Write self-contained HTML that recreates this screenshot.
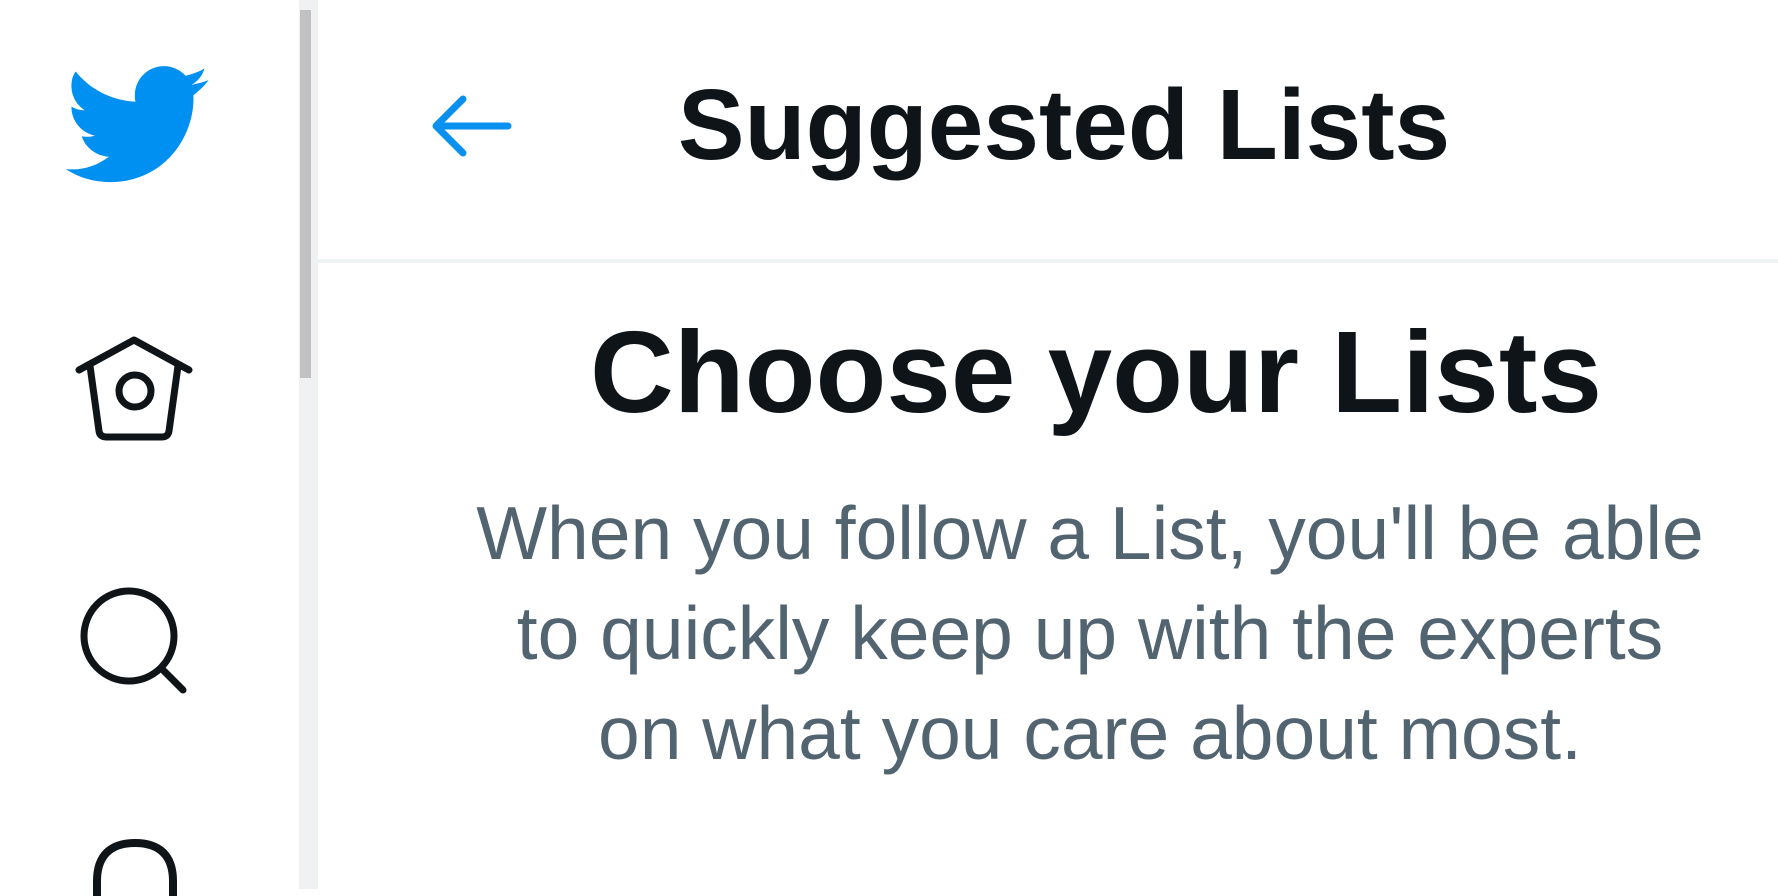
<!DOCTYPE html>
<html><head><meta charset="utf-8"><style>
html,body{margin:0;padding:0;width:1778px;height:889px;overflow:hidden;background:#fff;font-family:"Liberation Sans",sans-serif}
.abs{position:absolute}
.t{white-space:nowrap;text-align:center;line-height:1}
</style></head><body>
<div class="abs" style="left:299px;top:0;width:19px;height:889px;background:#eff1f2"></div>
<div class="abs" style="left:300px;top:10px;width:11px;height:368px;background:#c1c1c1"></div>
<div class="abs" style="left:318px;top:259px;width:1460px;height:4px;background:#eff3f4"></div>
<svg class="abs" style="left:66px;top:66px" width="145" height="118" viewBox="0 0 24 19.5"><path fill="#0090f2" d="M23.6 2.3c-.9.4-1.8.6-2.8.8 1-.6 1.8-1.5 2.1-2.7-.9.6-2 .9-3.1 1.2C18.9.6 17.6 0 16.2 0c-2.7 0-4.8 2.2-4.8 4.8 0 .4 0 .8.1 1.1C7.5 5.7 3.9 3.8 1.6.9c-.5.7-.7 1.5-.7 2.4 0 1.7.9 3.2 2.2 4-.8 0-1.5-.2-2.2-.6v.1c0 2.3 1.7 4.3 3.9 4.7-.4.1-.8.2-1.3.2-.3 0-.6 0-.9-.1.6 1.9 2.4 3.3 4.5 3.4-1.7 1.3-3.8 2.1-6 2.1-.4 0-.8 0-1.2-.1 2.1 1.4 4.7 2.2 7.4 2.2 8.9 0 13.8-7.4 13.8-13.8v-.6c.9-.7 1.8-1.5 2.5-2.5z"/></svg>
<svg class="abs" style="left:428px;top:90px" width="86" height="72" viewBox="0 0 86 72"><path d="M80 36H10M35 9L8 36l27 27" fill="none" stroke="#0a91f0" stroke-width="7" stroke-linecap="round" stroke-linejoin="round"/></svg>
<svg class="abs" style="left:74px;top:334px" width="124" height="114" viewBox="0 0 124 114"><g fill="none" stroke="#0f1419" stroke-width="7" stroke-linecap="round" stroke-linejoin="round"><path d="M5 36L60 6l55 30"/><path d="M16 32l9 65c.5 4 3 6 7 6h56c4 0 6.5-2 7-6l9-65"/><circle cx="61" cy="57" r="16"/></g></svg>
<svg class="abs" style="left:77px;top:584px" width="114" height="114" viewBox="0 0 114 114"><g fill="none" stroke="#0f1419" stroke-width="7" stroke-linecap="round"><circle cx="52" cy="52" r="45"/><path d="M85 85l21 21"/></g></svg>
<svg class="abs" style="left:92px;top:836px" width="86" height="60" viewBox="0 0 86 60"><path d="M5 60V45C5 20 18 7 43 7s38 13 38 38v15" fill="none" stroke="#0f1419" stroke-width="8"/></svg>
<div class="abs t" style="left:564px;top:75px;width:1000px;font-size:100px;font-weight:bold;color:#0f1419">Suggested Lists</div>
<div class="abs t" style="left:446px;top:314px;width:1300px;font-size:116px;font-weight:bold;color:#0f1419">Choose your Lists</div>
<div class="abs t" style="left:440px;top:483px;width:1300px;font-size:75px;line-height:100px;color:#536471">When you follow a List, you'll be able<br>to quickly keep up with the experts<br>on what you care about most.</div>
</body></html>
